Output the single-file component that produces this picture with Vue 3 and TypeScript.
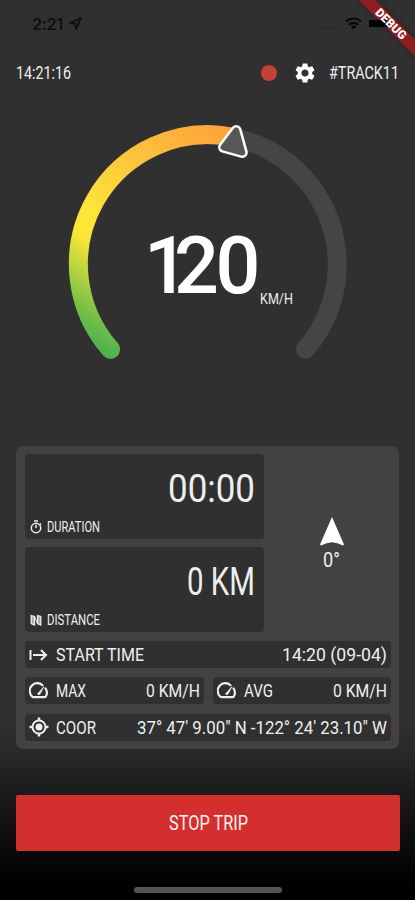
<script setup lang="ts">
import { h, type FunctionalComponent } from 'vue'

interface LcdProps {
  text: string
  w: number
  cap: number
}

// Readout text fitted to a fixed width, sized by its cap height.
// The box carries 4px of slack below and 2px to the right, cancelled by margins.
const Lcd: FunctionalComponent<LcdProps> = (props) =>
  h('svg', { class: 'lcd', width: props.w + 2, height: props.cap + 4 }, [
    h(
      'text',
      {
        x: 0,
        y: props.cap,
        'font-size': props.cap / 0.711,
        textLength: props.w,
        lengthAdjust: 'spacingAndGlyphs',
      },
      props.text,
    ),
  ])
Lcd.props = ['text', 'w', 'cap']

const speeds = [
  { label: 'MAX', labelWidth: 30, value: '0 KM/H', valueWidth: 54 },
  { label: 'AVG', labelWidth: 29, value: '0 KM/H', valueWidth: 54 },
]
</script>

<template>
  <main class="screen">
    <header class="status">
      <span class="clock">2:21</span>
      <svg class="locate" width="13" height="13" viewBox="0 0 13 13">
        <path d="M1 6.2 12 1 7 12 6.3 6.8Z" fill="none" stroke="#101010" stroke-width="1.9" stroke-linejoin="round" />
      </svg>
      <svg class="dots" width="18" height="3" viewBox="0 0 18 3">
        <path d="M0 1.5h3M5 1.5h3M10 1.5h3M15 1.5h3" stroke="#252525" stroke-width="1.5" />
      </svg>
      <svg class="wifi" width="17" height="13" viewBox="0 0 17 13">
        <g fill="none" stroke="#080808" stroke-width="2.1">
          <path d="M1 4.6a10.7 10.7 0 0 1 15 0" />
          <path d="M3.9 7.7a6.6 6.6 0 0 1 9.2 0" />
        </g>
        <path d="M8.500 12.600 5.900 9.900a3.700 3.700 0 0 1 5.200 0Z" fill="#080808" />
      </svg>
      <span class="battery"></span>
    </header>
    <div class="banner"><span class="ribbon"></span></div>
    <div class="banner front"><span class="ribbon-text">DEBUG</span></div>

    <section class="top">
      <Lcd text="14:21:16" :w="55" :cap="13" />
      <div class="top-right">
        <span class="record"></span>
        <svg class="gear" width="24" height="24" viewBox="0 0 24 24">
          <path fill="#fff" d="M19.140 12.940c.04-.3.06-.61.06-.94 0-.32-.02-.64-.07-.94l2.030-1.580c.18-.14.23-.41.12-.61l-1.920-3.320c-.12-.22-.37-.29-.59-.22l-2.390.96c-.5-.38-1.030-.7-1.620-.94l-.36-2.540c-.04-.24-.24-.41-.48-.41h-3.840c-.24 0-.43.17-.47.41l-.36 2.540c-.59.24-1.130.57-1.620.94l-2.390-.96c-.22-.08-.47 0-.59.22L2.740 8.870c-.12.21-.08.47.12.61l2.030 1.580c-.05.3-.09.63-.09.94s.02.64.07.94l-2.030 1.580c-.18.14-.23.41-.12.61l1.920 3.320c.12.22.37.29.59.22l2.390-.96c.5.38 1.030.7 1.620.94l.36 2.540c.05.24.24.41.48.41h3.840c.24 0 .44-.17.47-.41l.36-2.540c.59-.24 1.130-.56 1.620-.94l2.390.96c.22.08.47 0 .59-.22l1.920-3.320c.12-.22.07-.47-.12-.61l-2.010-1.580zM12 15.600c-1.980 0-3.600-1.620-3.600-3.600s1.620-3.600 3.600-3.600 3.600 1.620 3.600 3.600-1.620 3.600-3.600 3.600z" />
        </svg>
        <Lcd text="#TRACK11" :w="70" :cap="13" />
      </div>
    </section>

    <section class="gauge">
      <svg width="300" height="260" viewBox="58 110 300 260">
        <defs>
          <linearGradient id="heat" gradientUnits="userSpaceOnUse" x1="100" y1="349" x2="235" y2="130">
            <stop offset="0" stop-color="#50b24d" />
            <stop offset="0.08" stop-color="#6dbd49" />
            <stop offset="0.34" stop-color="#fbe736" />
            <stop offset="0.44" stop-color="#ffe438" />
            <stop offset="0.7" stop-color="#fdc53b" />
            <stop offset="1" stop-color="#fca23a" />
          </linearGradient>
        </defs>
        <g fill="none" stroke-width="19" stroke-linecap="round">
          <path d="M110.500 349.300A129.300 129.300 0 1 1 305.500 349.300" stroke="#454545" />
          <path d="M110.500 349.300A129.300 129.300 0 0 1 232 137" stroke="url(#heat)" />
        </g>
        <g stroke-linejoin="round">
          <path d="M236.200 130.500 223.500 147.300 242.300 152.500Z" fill="#fff" stroke="#fff" stroke-width="11" />
          <path d="M236.200 130.500 223.500 147.300 242.300 152.500Z" fill="#575757" stroke="#575757" stroke-width="6" />
        </g>
        <text class="speed" y="292.500" x="144 174 215.500">120</text>
        <text class="unit" x="260" y="303.500" textLength="33" lengthAdjust="spacingAndGlyphs">KM/H</text>
      </svg>
    </section>

    <section class="panel">
      <div class="upper">
        <div class="tiles">
          <div class="tile big">
            <Lcd class="value" text="00:00" :w="87" :cap="27" />
            <div class="caption">
              <svg width="12" height="14" viewBox="0 0 12 14" fill="none" stroke="#eee" stroke-width="1.500">
                <circle cx="6" cy="8" r="4.700" />
                <path d="M4 .9h4M6 8V4.700M9.800 3.500l1.200 1.100" />
              </svg>
              <Lcd text="DURATION" :w="53" :cap="10" />
            </div>
          </div>
          <div class="tile big">
            <Lcd class="value" text="0 KM" :w="68" :cap="27" />
            <div class="caption">
              <svg width="12" height="14" viewBox="0 0 12 14" fill="none" stroke="#eee">
                <path d="M1.200 2.500 4.500 3.500v8.500L1.200 10.500ZM7.500 2.500 10.800 3.500v8.500L7.500 10.500Z" fill="#aaa" stroke-width="1.300" />
                <path d="M4.500 3.500 7.500 10.500" stroke-width="1" />
              </svg>
              <Lcd text="DISTANCE" :w="53" :cap="10" />
            </div>
          </div>
        </div>
        <div class="compass">
          <svg width="24" height="30" viewBox="0 0 24 30">
            <path d="M12 0 24 27.500 23 28.600Q17.500 25.800 12 25.300 6.500 25.800 1 28.600L0 27.500Z" fill="#fff" />
          </svg>
          <Lcd text="0°" :w="17" :cap="14" />
        </div>
      </div>

      <div class="tile row">
        <svg class="icon" width="20" height="20" viewBox="0 0 20 20" fill="none" stroke="#eee" stroke-width="2">
          <path d="M1.500 5v10M4 10h13M12 5l5 5-5 5" />
        </svg>
        <Lcd text="START TIME" :w="88" :cap="13" />
        <Lcd class="end" text="14:20 (09-04)" :w="105" :cap="13" />
      </div>

      <div class="pair">
        <div v-for="speed in speeds" :key="speed.label" class="tile row">
          <svg class="icon" width="20" height="20" viewBox="0 0 20 20" fill="none" stroke="#eee" stroke-width="2.200" stroke-linecap="round" stroke-linejoin="round">
            <path d="M13.500 4.200A7.600 7.600 0 0 0 3.200 15.500Q3.600 16.200 4.500 16.200h11Q16.400 16.200 16.800 15.500A7.600 7.600 0 0 0 16.500 7.400" />
            <path d="M9 12.400 14.800 5.800 11 13Q9.800 14.200 8.900 13.200 8.500 12.800 9 12.400Z" fill="#eee" stroke-width=".8" />
          </svg>
          <Lcd :text="speed.label" :w="speed.labelWidth" :cap="13" />
          <Lcd class="end" :text="speed.value" :w="speed.valueWidth" :cap="13" />
        </div>
      </div>

      <div class="tile row">
        <svg class="icon" width="20" height="20" viewBox="0 0 20 20" fill="none" stroke="#eee" stroke-width="2">
          <circle cx="10" cy="10" r="6.500" />
          <circle cx="10" cy="10" r="3.500" fill="#eee" stroke="none" />
          <path d="M10 .5v3M10 16.500v3M.5 10h3M16.500 10h3" stroke-width="2.600" />
        </svg>
        <Lcd text="COOR" :w="40" :cap="13" />
        <Lcd class="end" text="37° 47' 9.00&quot; N -122° 24' 23.10&quot; W" :w="250" :cap="13" />
      </div>
    </section>

    <button class="stop" type="button"><Lcd text="STOP TRIP" :w="79" :cap="14" /></button>
    <div class="home"></div>
  </main>
</template>

<style>
body {
  margin: 0;
  background: #303030;
}
</style>

<style scoped>
.screen {
  position: relative;
  box-sizing: border-box;
  display: flex;
  flex-direction: column;
  width: 415px;
  height: 900px;
  padding: 0 16px;
  overflow: hidden;
  color: #eee;
  font-family: Roboto, 'Liberation Sans', sans-serif;
  background: linear-gradient(#303030 0, #303030 715px, #272727 760px, #1a1a1a 795px, #090909 850px, #000 885px);
}
.lcd {
  display: block;
  flex: none;
  margin-right: -2px;
  margin-bottom: -4px;
  overflow: visible;
  fill: currentColor;
  white-space: pre;
}
.status {
  display: flex;
  align-items: center;
  height: 47px;
  padding-left: 16px;
  flex: none;
}
.clock {
  width: 37px;
  color: #0d0d0d;
  font: 500 16.5px Inter, sans-serif;
  letter-spacing: -0.3px;
}
.dots {
  margin: 7px 7px 0 auto;
}
.wifi {
  margin-right: 7px;
}
.battery {
  position: relative;
  z-index: 2;
  width: 20px;
  height: 7px;
  margin-right: 10px;
  background: #000;
}
.banner {
  position: absolute;
  z-index: 1;
  top: 0;
  right: 0;
  width: 80px;
  height: 80px;
  overflow: hidden;
}
.front {
  z-index: 3;
}
.ribbon,
.ribbon-text {
  position: absolute;
  top: 18px;
  left: -4px;
  width: 120px;
  height: 12px;
  transform: rotate(45deg);
}
.ribbon {
  background: #8f1d20;
  box-shadow: 0 0 5px rgba(0, 0, 0, 0.4);
}
.ribbon-text {
  color: #fff;
  font: 900 12px/12px Roboto, sans-serif;
  text-align: center;
}
.top {
  display: flex;
  align-items: center;
  justify-content: space-between;
  height: 51px;
  flex: none;
}
.top-right {
  display: flex;
  align-items: center;
}
.record {
  width: 16px;
  height: 16px;
  border-radius: 50%;
  background: #c44134;
}
.gear {
  margin: 0 12px 0 16px;
}
.gauge {
  display: flex;
  justify-content: center;
  height: 271px;
  margin-top: 12px;
  margin-bottom: 65px;
  flex: none;
}
.speed {
  fill: #fff;
  font-size: 79px;
  font-weight: 500;
}
.unit {
  fill: #eee;
  font-size: 15px;
}
.panel {
  box-sizing: border-box;
  display: flex;
  flex-direction: column;
  gap: 9px;
  width: 383px;
  height: 303px;
  padding: 8px 8px 8px 9px;
  border-radius: 7px;
  background: #424242;
  flex: none;
}
.upper {
  display: flex;
}
.tiles {
  display: flex;
  flex-direction: column;
  gap: 8px;
  width: 239px;
}
.tile {
  box-sizing: border-box;
  border-radius: 4px;
  background: #303030;
}
.big {
  display: flex;
  flex-direction: column;
  justify-content: space-between;
  height: 85px;
  padding: 21px 9px 5px 5px;
}
.value {
  align-self: flex-end;
}
.caption {
  display: flex;
  align-items: center;
  gap: 5px;
}
.compass {
  display: flex;
  flex: 1;
  flex-direction: column;
  align-items: center;
  padding-top: 63px;
  padding-left: 8px;
  gap: 6px;
}
.row {
  display: flex;
  flex: 1;
  align-items: center;
  height: 27px;
  padding: 0 4px;
}
.icon {
  flex: none;
  margin-right: 7px;
}
.end {
  margin-left: auto;
}
.pair {
  display: flex;
  flex: 1;
  gap: 9px;
}
.stop {
  display: flex;
  align-items: center;
  justify-content: center;
  width: 384px;
  height: 56px;
  margin: 46px 0 0;
  padding: 0;
  border: 0;
  border-radius: 2px;
  color: #fff0ee;
  font: inherit;
  background: #d32f2f;
  flex: none;
}
.home {
  width: 148px;
  height: 6px;
  margin: 36px auto 0;
  border-radius: 3px;
  background: #555;
  flex: none;
}
</style>
